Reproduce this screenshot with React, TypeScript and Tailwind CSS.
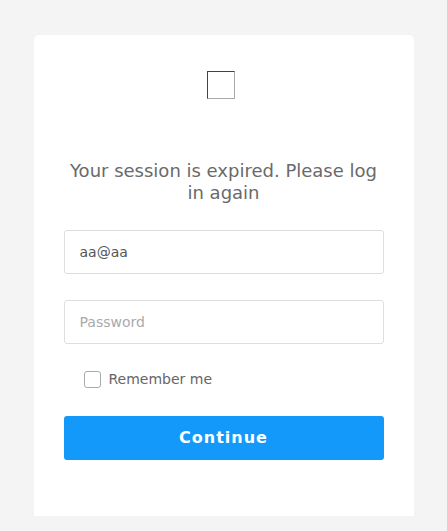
export default function App() {
  return (
    <div
      className="min-h-screen bg-[#f4f4f4] pt-[35px]"
      style={{ fontFamily: '"DejaVu Sans", sans-serif' }}
    >
      <div className="mx-auto w-[380px] rounded-t-[5px] bg-white px-[30px] pt-[36px] pb-[56px]">
        <div className="ml-[143px] h-[28px] w-[28px] border border-t-[#444] border-l-[#444] border-b-[#aaa] border-r-[#aaa]" />
        <h1 className="mt-[61px] text-center text-[18px] leading-[22px] font-normal text-[#6a6a6a]">
          Your session is expired. Please log in again
        </h1>
        <input
          type="text"
          defaultValue="aa@aa"
          className="mt-[26px] block h-[44px] w-full rounded-[3px] border border-[#dedede] px-[15px] text-[14px] text-[#555] outline-none"
        />
        <input
          type="password"
          placeholder="Password"
          className="mt-[26px] block h-[44px] w-full rounded-[3px] border border-[#dedede] px-[15px] text-[14px] text-[#555] outline-none placeholder:text-[#aaa]"
        />
        <label className="mt-[25px] ml-[20px] flex items-center gap-[8px] text-[14px] text-[#666]">
          <span className="block h-[17px] w-[17px] rounded-[3px] border border-[#aaa] bg-white" />
          Remember me
        </label>
        <button className="mt-[26px] block h-[44px] w-full rounded-[3px] bg-[#1399fa] text-[16px] font-bold tracking-[1px] text-white">
          Continue
        </button>
      </div>
    </div>
  );
}
